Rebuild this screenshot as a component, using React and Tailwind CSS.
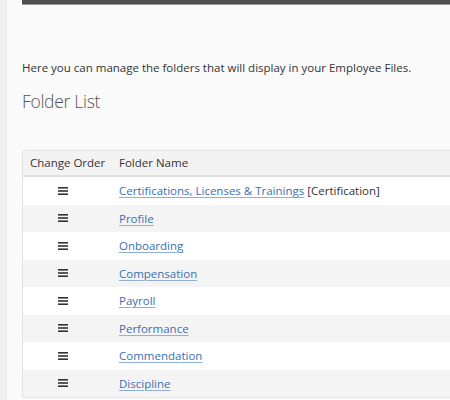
const folders = [
  { name: "Certifications, Licenses & Trainings", tag: "[Certification]" },
  { name: "Profile" },
  { name: "Onboarding" },
  { name: "Compensation" },
  { name: "Payroll" },
  { name: "Performance" },
  { name: "Commendation" },
  { name: "Discipline" },
];

function Grip() {
  return (
    <svg width="10" height="8" viewBox="0 0 10 8" className="block">
      <rect x="0" y="0" width="10" height="1.6" fill="#333" />
      <rect x="0" y="3.2" width="10" height="1.6" fill="#333" />
      <rect x="0" y="6.4" width="10" height="1.6" fill="#333" />
    </svg>
  );
}

export default function App() {
  return (
    <div
      className="flex w-[450px] h-[400px] overflow-hidden bg-[#fafafa] text-[#333]"
      style={{ fontFamily: '"Open Sans", "Liberation Sans", sans-serif' }}
    >
      <div className="w-[7px] shrink-0 bg-[#f0f0f0] border-r border-[#e6e6e6]" />
      <div className="flex-1 min-w-0 pl-[15px]">
        <div className="h-[5px] bg-[#4f4f4f] border-b border-[#9a9a9a]" />
        <p className="mt-[55px] text-[11.5px] leading-[16px]">
          Here you can manage the folders that will display in your Employee Files.
        </p>
        <h2 className="mt-[13px] text-[17.5px] leading-[24px] font-light text-[#555] tracking-[-0.3px]">
          Folder List
        </h2>
        <div className="mt-[37px] w-[460px] border border-r-0 border-[#e2e2e2] rounded-tl-[4px] overflow-hidden text-[11.5px]">
          <div className="flex items-center h-[26px] bg-[#f3f3f3] border-b-2 border-[#e0e0e0]">
            <div className="w-[96px] pl-[7px]">Change Order</div>
            <div className="flex-1">Folder Name</div>
          </div>
          {folders.map((f, i) => (
            <div
              key={f.name}
              className={`flex items-center h-[27.5px] ${i % 2 === 0 ? "bg-white" : "bg-[#f4f4f4]"}`}
            >
              <div className="w-[96px] pl-[35px]">
                <Grip />
              </div>
              <div className="flex-1">
                <a href="#" className="text-[#3a70b3] underline underline-offset-2 decoration-[#8fb0d8]">
                  {f.name}
                </a>
                {f.tag && <span> {f.tag}</span>}
              </div>
            </div>
          ))}
        </div>
      </div>
    </div>
  );
}
